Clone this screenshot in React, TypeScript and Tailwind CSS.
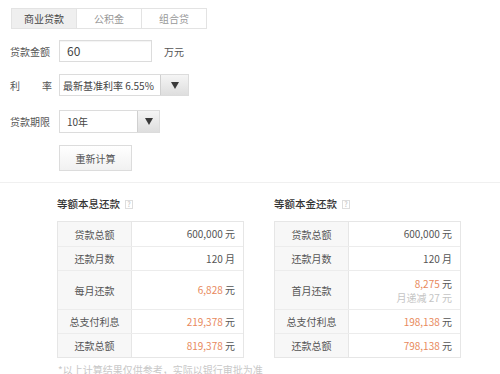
import React from "react";

const font = { fontFamily: '"Noto Sans CJK SC", "Noto Sans", sans-serif' };

function Tri() {
  return (
    <svg width="8" height="7" viewBox="0 0 8 7">
      <path d="M0 0 L8 0 L4 7 Z" fill="#3a3a3a" />
    </svg>
  );
}

type Row = { label: string; value: string; unit: string; orange?: boolean; sub?: string; tall?: boolean };

function Table({ rows }: { rows: Row[] }) {
  return (
    <div className="w-[187px] border border-[#e6e6e6] text-[10px]">
      {rows.map((r, i) => (
        <div
          key={i}
          className={`flex ${i > 0 ? "border-t border-[#ececec]" : ""} ${r.tall ? "h-[39px]" : "h-[24px]"}`}
        >
          <div className="w-[74px] shrink-0 bg-[#f7f7f7] border-r border-[#e6e6e6] flex items-center justify-center text-[#555]">
            {r.label}
          </div>
          <div className="flex-1 flex flex-col items-end justify-center pr-[8px] text-[#555]">
            <div className="leading-[14px]">
              <span className={r.orange ? "text-[#e8895c]" : ""}>{r.value}</span> {r.unit}
            </div>
            {r.sub && <div className="leading-[13px] text-[#c4c4c4]">{r.sub}</div>}
          </div>
        </div>
      ))}
    </div>
  );
}

function Title({ text }: { text: string }) {
  return (
    <div className="flex items-center h-[20px] mb-[7px] text-[10.5px] text-[#333] font-medium">
      <span>{text}</span>
      <span className="ml-[5px] w-[8px] h-[9px] border border-[#ddd] text-[7px] leading-[8px] text-[#ccc] flex items-center justify-center">
        ?
      </span>
    </div>
  );
}

export default function App() {
  const left: Row[] = [
    { label: "贷款总额", value: "600,000", unit: "元" },
    { label: "还款月数", value: "120", unit: "月" },
    { label: "每月还款", value: "6,828", unit: "元", orange: true, tall: true },
    { label: "总支付利息", value: "219,378", unit: "元", orange: true },
    { label: "还款总额", value: "819,378", unit: "元", orange: true },
  ];
  const right: Row[] = [
    { label: "贷款总额", value: "600,000", unit: "元" },
    { label: "还款月数", value: "120", unit: "月" },
    { label: "首月还款", value: "8,275", unit: "元", orange: true, sub: "月递减 27 元", tall: true },
    { label: "总支付利息", value: "198,138", unit: "元", orange: true },
    { label: "还款总额", value: "798,138", unit: "元", orange: true },
  ];
  return (
    <div className="w-[500px] h-[374px] bg-white overflow-hidden text-[#555]" style={font}>
      <div className="pl-[10px] pt-[8px] h-[182px]">
        <div className="flex ml-[1px] w-[196px] h-[21px] border border-[#e3e3e3] text-[10px]">
          <div className="w-[65px] bg-[#efefef] border-r border-[#e3e3e3] flex items-center justify-center text-[#444]">
            商业贷款
          </div>
          <div className="w-[65px] border-r border-[#e3e3e3] flex items-center justify-center text-[#999]">
            公积金
          </div>
          <div className="flex-1 flex items-center justify-center text-[#999]">组合贷</div>
        </div>

        <div className="flex items-center mt-[11px] h-[22px]">
          <div className="w-[49px] text-[10px] text-[#555]">贷款金额</div>
          <div className="w-[93px] h-[22px] border border-[#dcdcdc] flex items-center pl-[7px] text-[12px] text-[#444] shadow-[inset_0_1px_1px_rgba(0,0,0,0.05)]">
            60
          </div>
          <div className="ml-[12px] text-[10px] text-[#555]">万元</div>
        </div>

        <div className="flex items-center mt-[12px] h-[22px]">
          <div className="w-[49px] pr-[7px]">
            <div className="flex justify-between text-[10px] text-[#555]">
              <span>利</span>
              <span>率</span>
            </div>
          </div>
          <div className="flex h-[22px] border border-[#dcdcdc]">
            <div className="w-[100px] flex items-center pl-[3px] text-[10px] text-[#444] whitespace-nowrap">
              最新基准利率 6.55%
            </div>
            <div className="w-[28px] border-l border-[#d0d0d0] bg-gradient-to-b from-[#f5f5f5] to-[#dedede] flex items-center justify-center">
              <Tri />
            </div>
          </div>
        </div>

        <div className="flex items-center mt-[14px] h-[23px]">
          <div className="w-[49px] text-[10px] text-[#555]">贷款期限</div>
          <div className="flex h-[23px] border border-[#dcdcdc]">
            <div className="w-[77px] flex items-center pl-[7px] text-[10px] text-[#444]">10年</div>
            <div className="w-[22px] border-l border-[#d0d0d0] bg-gradient-to-b from-[#f5f5f5] to-[#dedede] flex items-center justify-center">
              <Tri />
            </div>
          </div>
        </div>

        <div className="ml-[49px] mt-[12px] w-[73px] h-[26px] border border-[#dcdcdc] bg-gradient-to-b from-white to-[#f1f1f1] flex items-center justify-center text-[10px] text-[#555]">
          重新计算
        </div>
      </div>

      <div className="border-t border-[#f0f0f0]" />

      <div className="flex pt-[11px] pl-[57px] gap-[30px]">
        <div>
          <Title text="等额本息还款" />
          <Table rows={left} />
        </div>
        <div>
          <Title text="等额本金还款" />
          <Table rows={right} />
        </div>
      </div>
      <div className="pl-[58px] mt-[5px] text-[10px] leading-[14px] text-[#c8c8c8] whitespace-nowrap">
        *以上计算结果仅供参考，实际以银行审批为准
      </div>
    </div>
  );
}
